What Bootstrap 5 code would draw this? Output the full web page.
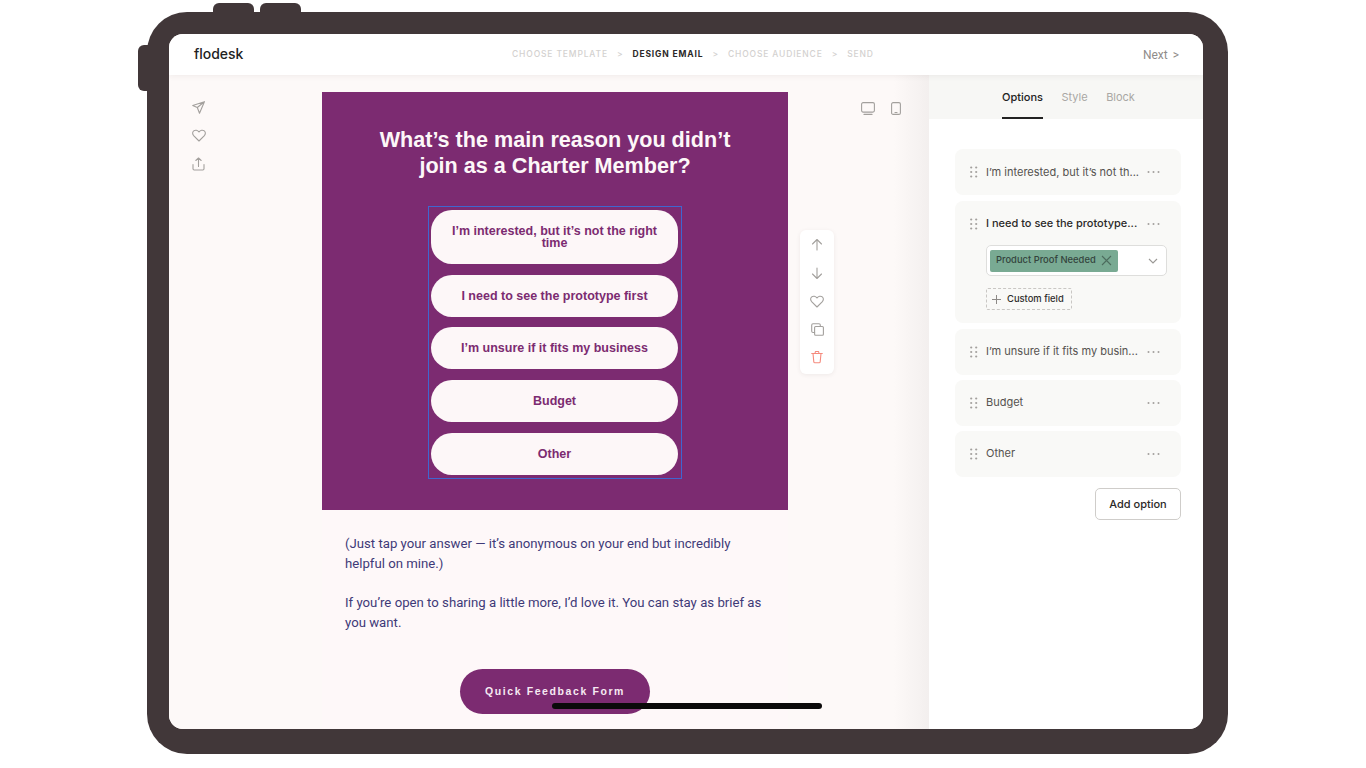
<!DOCTYPE html>
<html lang="en">
<head>
    <meta charset="UTF-8">
    <meta name="viewport" content="width=device-width, initial-scale=1.0">
    <title>Flodesk design email</title>
    <link href="https://cdn.jsdelivr.net/npm/bootstrap@5.3.0/dist/css/bootstrap.min.css" rel="stylesheet">
    <style>
        html, body { height: 100%; overflow: hidden; background: #fff; font-family: "Inter", sans-serif; }
        .page-wrap { padding: 12px 0 0 147px; }
        .tablet { position: relative; width: 1081px; height: 742px; padding: 22px 25px 25px 22px; background: #413739; border-radius: 40px; }
        .hw-btn { position: absolute; background: #413739; }
        .hw-top1 { left: 66px; top: -9px; width: 41px; height: 10px; border-radius: 6px 6px 0 0; }
        .hw-top2 { left: 113px; top: -9px; width: 41px; height: 10px; border-radius: 6px 6px 0 0; }
        .hw-side { left: -9px; top: 33px; width: 10px; height: 46px; border-radius: 6px 0 0 6px; }
        .home-bar { position: absolute; left: 405px; top: 691px; width: 270px; height: 6px; border-radius: 3px; background: #0b0a0a; z-index: 5; }

        .screen { width: 1034px; height: 695px; border-radius: 14px; overflow: hidden; background: #fdf9f8; }
        .top-bar { height: 41px; background: #fff; position: relative; z-index: 2; box-shadow: 0 1px 6px rgba(60,40,40,.07); padding: 0 24px 0 25px; }
        .logo { font-size: 14px; font-weight: 500; color: #222; letter-spacing: -.05px; width: 318px; line-height: 1; margin-top: -2px; }
        .steps { font-size: 8.5px; letter-spacing: .85px; color: #d3d1cf; gap: 9px; font-weight: 500; }
        .steps b { color: #2b2828; font-weight: 700; }
        .next-link { font-size: 12px; color: #8f8c8a; font-family: "Roboto", sans-serif; word-spacing: 2px; }

        .work-area { height: 654px; }
        .canvas-area { width: 760px; background: linear-gradient(to right, #fdf9f8 0, #fdf9f8 725px, #f3efee 760px); }
        .side-tools { width: 153px; padding: 26px 0 0 23px; gap: 15px; }
        .mail-col { width: 466px; height: 654px; background: #fef8f9; margin-top: 17px; }
        .poll-block { height: 418px; background: #7c2b71; padding-top: 35px; }
        .poll-title { width: 380px; margin: 0 auto 27px; font: 700 21.6px/26px "Liberation Sans", sans-serif; color: #fdf7f8; text-align: center; }
        .poll-select { width: 254px; height: 273px; margin: 0 auto; padding: 3px 2px; border: 1px solid #3f66d0; }
        .poll-pill { width: 247px; height: 42px; margin-bottom: 11px; border-radius: 21px; background: #fdf7f8; color: #7c2b71; font: 700 12.5px/12px "Liberation Sans", sans-serif; text-align: center; padding: 0 18px; }
        .poll-pill.tall { height: 54px; }
        .poll-pill.tight { margin-bottom: 10px; }
        .mail-text { padding: 24px 23px 0; font: 400 13.2px/19.7px "Roboto", sans-serif; color: #3f3a78; }
        .mail-text p { margin: 0 0 20px; }
        .cta-wrap { margin-top: 36px; }
        .cta-btn { width: 190px; height: 45px; border-radius: 23px; background: #7c2b71; color: #f6e9f2; font: 700 10.5px "Liberation Sans", sans-serif; letter-spacing: 1.6px; }

        .right-tools { width: 141px; }
        .view-icons { gap: 16px; padding: 27px 0 0 73px; }
        .block-tools { width: 34px; height: 144px; margin: 115px 0 0 12px; background: #fff; border-radius: 6px; box-shadow: 0 1px 4px rgba(70,50,50,.08); padding-top: 6px; gap: 10px; }

        .panel { width: 274px; background: #fff; }
        .panel-tabs { height: 44px; background: #f7f7f5; gap: 18.5px; padding-left: 73px; font-size: 11px; color: #a9a7a4; }
        .panel-tab { height: 44px; line-height: 44px; }
        .panel-tab.on { color: #222; font-weight: 500; border-bottom: 2px solid #222; }
        .panel-body { padding: 30px 22px 0 26px; }
        .opt-row { background: #f9f9f7; border-radius: 8px; margin-bottom: 5px; padding: 0 20px 0 15px; height: 46px; font-size: 11px; color: #55524f; }
        .opt-row.first-row { margin-bottom: 6px; }
        .opt-head { height: 46px; }
        .opt-row.open { height: 122px; margin-bottom: 6px; padding-right: 0; }
        .opt-row.open .opt-label { color: #2b2928; font-weight: 500; }
        .opt-label { flex: none; width: 153px; margin: 0 8px; padding-bottom: 2px; white-space: nowrap; }
        .first-row .opt-label { padding-bottom: 0; }
        .tag-box { width: 181px; height: 31px; margin: -2px 0 0 16px; background: #fff; border: 1px solid #dededc; border-radius: 5px; padding: 3px; }
        .green-tag { width: 128px; height: 22px; background: #79aa93; border-radius: 2px; font-size: 9.4px; font-weight: 500; color: #33433c; padding-left: 6px; gap: 5px; white-space: nowrap; }
        .tag-chevron { display: block; margin-right: 5px; fill: none; stroke: #9a9895; stroke-width: 1.1; }
        .tag-x { display: block; flex: none; fill: none; stroke: #4d6c5e; stroke-width: 1.1; }
        .plus-ico { display: block; flex: none; fill: none; stroke: #8d8a87; stroke-width: 1; }
        .del-ico { display: block; fill: none; stroke: #f58a7d; stroke-width: 1.1; stroke-linecap: round; stroke-linejoin: round; }
        .field-btn { width: 86px; height: 22px; margin: 12px 0 0 16px; border: 1px dashed #c9c7c4; border-radius: 2px; font-size: 9.4px; font-weight: 500; color: #2e2c2b; gap: 6px; padding-left: 5px; white-space: nowrap; }
        .add-btn { width: 86px; height: 32px; margin-top: 6px; background: #fff; border: 1px solid #cfcdca; border-radius: 5px; font-size: 11px; font-weight: 500; color: #2b2928; }
        .ico { display: block; fill: none; stroke: #a3a09d; stroke-width: 1.1; stroke-linecap: round; stroke-linejoin: round; }
        .ico-fill { display: block; flex: none; fill: #a3a09d; }
    </style>
</head>
<body>
<div class="page-wrap">
    <div class="tablet">
        <div class="hw-btn hw-top1"></div>
        <div class="hw-btn hw-top2"></div>
        <div class="hw-btn hw-side"></div>
        <div class="home-bar"></div>

        <div class="screen">
            <!-- top bar -->
            <div class="top-bar d-flex align-items-center">
                <div class="logo">flodesk</div>
                <div class="steps d-flex align-items-center">
                    <span>CHOOSE TEMPLATE</span><span>&gt;</span><b>DESIGN EMAIL</b><span>&gt;</span><span>CHOOSE AUDIENCE</span><span>&gt;</span><span>SEND</span>
                </div>
                <div class="next-link ms-auto">Next &gt;</div>
            </div>

            <div class="work-area d-flex">
                <div class="canvas-area d-flex">
                    <div class="side-tools d-flex flex-column">
                        <svg class="ico" width="13" height="13" viewBox="0 0 13 13"><path d="M12.4.7 .7 4.4l4.6 2.1 2.2 5.8zM5.3 6.5 12.4.7"/></svg>
                        <svg class="ico" width="14" height="13" viewBox="0 0 14 13"><path d="M7 12 1.6 6.600C.2 5.100.4 3 1.700 1.900 3.200.8 5.600 1 7 3c1.400-2 3.800-2.200 5.300-1.100 1.300 1.100 1.500 3.200.1 4.700z"/></svg>
                        <svg class="ico" width="13" height="14" viewBox="0 0 13 14"><path d="M1 7.500v4.300c0 .7.500 1.200 1.200 1.200h8.600c.7 0 1.200-.5 1.200-1.200V7.500M6.500 9.500V1M3.800 3.500 6.500 1l2.700 2.500"/></svg>
                    </div>

                    <div class="mail-col">
                        <div class="poll-block">
                            <div class="poll-title">What’s the main reason you didn’t join as a Charter Member?</div>
                            <div class="poll-select">
                                <div class="poll-pill tall d-flex align-items-center justify-content-center">I’m interested, but it’s not the right time</div>
                                <div class="poll-pill tight d-flex align-items-center justify-content-center">I need to see the prototype first</div>
                                <div class="poll-pill d-flex align-items-center justify-content-center">I’m unsure if it fits my business</div>
                                <div class="poll-pill d-flex align-items-center justify-content-center">Budget</div>
                                <div class="poll-pill d-flex align-items-center justify-content-center">Other</div>
                            </div>
                        </div>
                        <div class="mail-text">
                            <p>(Just tap your answer — it’s anonymous on your end but incredibly helpful on mine.)</p>
                            <p>If you’re open to sharing a little more, I’d love it. You can stay as brief as you want.</p>
                        </div>
                        <div class="cta-wrap d-flex justify-content-center">
                            <div class="cta-btn d-flex align-items-center justify-content-center">Quick Feedback Form</div>
                        </div>
                    </div>

                    <div class="right-tools">
                        <div class="view-icons d-flex">
                            <svg class="ico" width="14" height="13" viewBox="0 0 14 13"><rect x=".6" y=".6" width="12.8" height="9.5" rx="1.5"/><path d="M3 12.400h8"/></svg>
                            <svg class="ico" width="10" height="13" viewBox="0 0 10 13"><rect x=".6" y=".6" width="8.8" height="11.8" rx="1.5"/><path d="M4 10.500h2"/></svg>
                        </div>
                        <div class="block-tools d-flex flex-column align-items-center">
                            <svg class="ico" width="12" height="18" viewBox="0 0 12 18"><path d="M6 14V3.500M1.500 8 6 3.500 10.500 8"/></svg>
                            <svg class="ico" width="12" height="18" viewBox="0 0 12 18"><path d="M6 4v10.500M1.500 10 6 14.500 10.500 10"/></svg>
                            <svg class="ico" width="14" height="18" viewBox="0 0 14 18"><path d="M7 15 1.600 9.600C.2 8.100.4 6 1.700 4.900 3.200 3.800 5.600 4 7 6c1.400-2 3.800-2.200 5.300-1.100 1.300 1.100 1.500 3.200.1 4.700z"/></svg>
                            <svg class="ico" width="13" height="18" viewBox="0 0 13 18"><rect x="3.600" y="6.500" width="8.8" height="8.8" rx="1"/><path d="M3.600 12.500H2A1.300 1.300 0 0 1 .7 11.300V5.200C.7 4.400 1.300 3.700 2 3.700h6c.7 0 1.300.6 1.300 1.400v1.400"/></svg>
                            <svg class="del-ico" width="12" height="18" viewBox="0 0 12 18"><path d="M.7 5.500h10.600M2 5.500l.8 8.300c.1.600.5 1 1.100 1h4.200c.6 0 1-.4 1.100-1l.8-8.300M4 5.500l.4-2h3.200l.4 2"/></svg>
                        </div>
                    </div>
                </div>

                <!-- right panel -->
                <div class="panel">
                    <div class="panel-tabs d-flex">
                        <div class="panel-tab on">Options</div>
                        <div class="panel-tab">Style</div>
                        <div class="panel-tab">Block</div>
                    </div>
                    <div class="panel-body">
                        <div class="opt-row first-row d-flex align-items-center">
                            <svg class="ico-fill" width="8" height="12" viewBox="0 0 8 12"><g id="dots"><circle cx="1.200" cy="1.500" r="1.100"/><circle cx="6.200" cy="1.500" r="1.100"/><circle cx="1.200" cy="6" r="1.100"/><circle cx="6.200" cy="6" r="1.100"/><circle cx="1.200" cy="10.500" r="1.100"/><circle cx="6.200" cy="10.500" r="1.100"/></g></svg>
                            <div class="opt-label">I’m interested, but it’s not th...</div>
                            <svg class="ico-fill" width="13" height="4" viewBox="0 0 13 4"><circle cx="1.500" cy="2" r="1"/><circle cx="6.500" cy="2" r="1"/><circle cx="11.500" cy="2" r="1"/></svg>
                        </div>
                        <div class="opt-row open">
                            <div class="opt-head d-flex align-items-center">
                                <svg class="ico-fill" width="8" height="12" viewBox="0 0 8 12"><use href="#dots"/></svg>
                                <div class="opt-label">I need to see the prototype...</div>
                                <svg class="ico-fill" width="13" height="4" viewBox="0 0 13 4"><circle cx="1.500" cy="2" r="1"/><circle cx="6.500" cy="2" r="1"/><circle cx="11.500" cy="2" r="1"/></svg>
                            </div>
                            <div class="tag-box d-flex align-items-center">
                                <div class="green-tag d-flex align-items-center">Product Proof Needed
                                    <svg class="tag-x" width="11" height="11" viewBox="0 0 11 11"><path d="M1 1l9 9M10 1l-9 9"/></svg>
                                </div>
                                <svg class="tag-chevron ms-auto" width="10" height="6" viewBox="0 0 10 6"><path d="M1 1l4 4 4-4"/></svg>
                            </div>
                            <div class="field-btn d-flex align-items-center">
                                <svg class="plus-ico" width="9" height="9" viewBox="0 0 9 9"><path d="M4.500 0v9M0 4.500h9"/></svg>
                                Custom field
                            </div>
                        </div>
                        <div class="opt-row d-flex align-items-center">
                            <svg class="ico-fill" width="8" height="12" viewBox="0 0 8 12"><use href="#dots"/></svg>
                            <div class="opt-label">I’m unsure if it fits my busin...</div>
                            <svg class="ico-fill" width="13" height="4" viewBox="0 0 13 4"><circle cx="1.500" cy="2" r="1"/><circle cx="6.500" cy="2" r="1"/><circle cx="11.500" cy="2" r="1"/></svg>
                        </div>
                        <div class="opt-row d-flex align-items-center">
                            <svg class="ico-fill" width="8" height="12" viewBox="0 0 8 12"><use href="#dots"/></svg>
                            <div class="opt-label">Budget</div>
                            <svg class="ico-fill" width="13" height="4" viewBox="0 0 13 4"><circle cx="1.500" cy="2" r="1"/><circle cx="6.500" cy="2" r="1"/><circle cx="11.500" cy="2" r="1"/></svg>
                        </div>
                        <div class="opt-row d-flex align-items-center">
                            <svg class="ico-fill" width="8" height="12" viewBox="0 0 8 12"><use href="#dots"/></svg>
                            <div class="opt-label">Other</div>
                            <svg class="ico-fill" width="13" height="4" viewBox="0 0 13 4"><circle cx="1.500" cy="2" r="1"/><circle cx="6.500" cy="2" r="1"/><circle cx="11.500" cy="2" r="1"/></svg>
                        </div>
                        <div class="d-flex justify-content-end">
                            <button class="add-btn p-0">Add option</button>
                        </div>
                    </div>
                </div>
            </div>
        </div>
    </div>
</div>
<script src="https://cdn.jsdelivr.net/npm/bootstrap@5.3.0/dist/js/bootstrap.bundle.min.js"></script>
</body>
</html>
